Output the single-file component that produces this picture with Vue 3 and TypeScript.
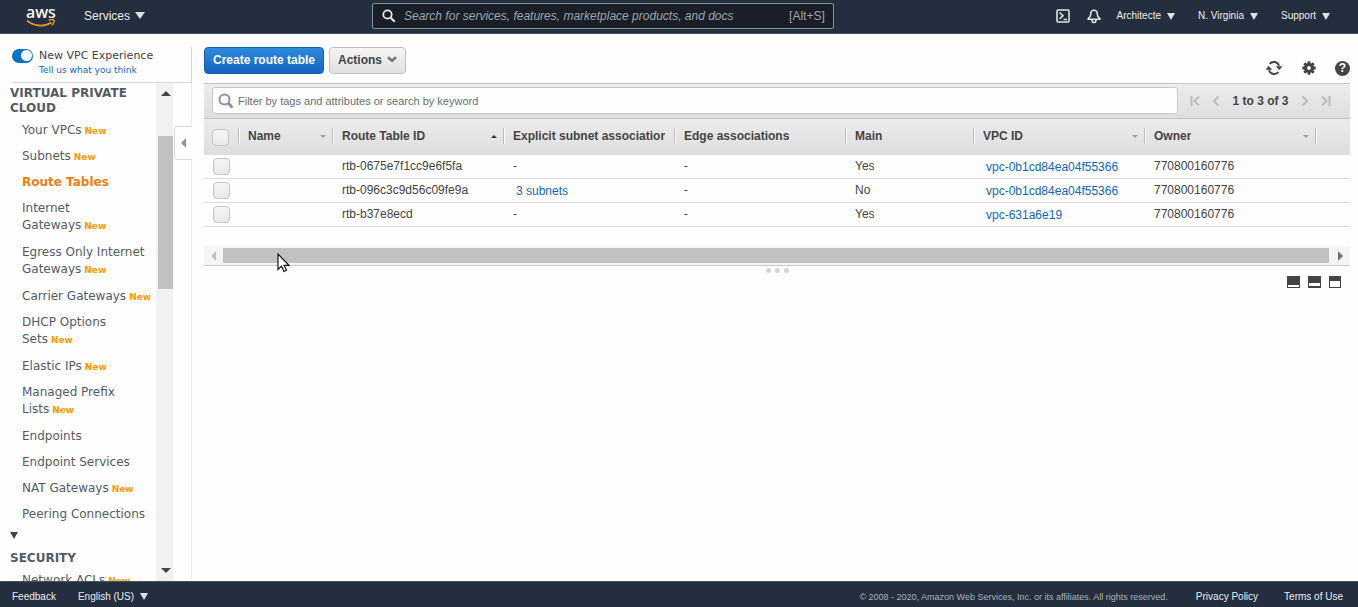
<script setup lang="ts">
import { ref } from 'vue'

interface NavItem { lines: string[]; isNew?: boolean; active?: boolean }
interface Column { label: string; cls: string; sort?: 'asc' | 'idle' }
interface RouteTable { id: string; subnets?: string; edge: string; main: string; vpc: string; owner: string }

const navItems: NavItem[] = [
  { lines: ['Your VPCs'], isNew: true },
  { lines: ['Subnets'], isNew: true },
  { lines: ['Route Tables'], active: true },
  { lines: ['Internet', 'Gateways'], isNew: true },
  { lines: ['Egress Only Internet', 'Gateways'], isNew: true },
  { lines: ['Carrier Gateways'], isNew: true },
  { lines: ['DHCP Options', 'Sets'], isNew: true },
  { lines: ['Elastic IPs'], isNew: true },
  { lines: ['Managed Prefix', 'Lists'], isNew: true },
  { lines: ['Endpoints'] },
  { lines: ['Endpoint Services'] },
  { lines: ['NAT Gateways'], isNew: true },
  { lines: ['Peering Connections'] },
]

const columns: Column[] = [
  { label: 'Name', cls: 'c-name', sort: 'idle' },
  { label: 'Route Table ID', cls: 'c-wide', sort: 'asc' },
  { label: 'Explicit subnet association', cls: 'c-wide' },
  { label: 'Edge associations', cls: 'c-wide' },
  { label: 'Main', cls: 'c-main' },
  { label: 'VPC ID', cls: 'c-wide', sort: 'idle' },
  { label: 'Owner', cls: 'c-wide', sort: 'idle' },
]

const rows: RouteTable[] = [
  { id: 'rtb-0675e7f1cc9e6f5fa', edge: '-', main: 'Yes', vpc: 'vpc-0b1cd84ea04f55366', owner: '770800160776' },
  { id: 'rtb-096c3c9d56c09fe9a', subnets: '3 subnets', edge: '-', main: 'No', vpc: 'vpc-0b1cd84ea04f55366', owner: '770800160776' },
  { id: 'rtb-b37e8ecd', edge: '-', main: 'Yes', vpc: 'vpc-631a6e19', owner: '770800160776' },
]

const accountMenus = ['Architecte', 'N. Virginia', 'Support']
const newExperience = ref(true)
const filter = ref('')
const search = ref('')
</script>

<template>
  <div class="console">
    <header class="topbar">
      <a class="logo" href="#" aria-label="AWS home">
        <span class="logo-text">aws</span>
        <svg class="smile" width="30" height="10" viewBox="0 0 30 10" aria-hidden="true">
          <path d="M1 1.600C8 7.600 19 8 25.400 3.600" fill="none" stroke="#f79a20" stroke-width="1.800" />
          <path d="M22.600 1.200C25 .5 27.500.6 28 1.200s-.3 3.300-2 5.200" fill="none" stroke="#f79a20" stroke-width="1.300" />
        </svg>
      </a>
      <button class="menu services" type="button">Services<i class="tri tri-lg"></i></button>
      <label class="search">
        <svg width="14" height="14" viewBox="0 0 14 14" aria-hidden="true">
          <circle cx="5.500" cy="5.500" r="4.200" fill="none" stroke="#e8eaea" stroke-width="1.800" />
          <path d="M8.700 8.700 12.700 12.700" stroke="#e8eaea" stroke-width="2" />
        </svg>
        <input v-model="search" type="text" placeholder="Search for services, features, marketplace products, and docs" aria-label="Search services" />
        <span class="hint">[Alt+S]</span>
      </label>
      <div class="account">
        <button class="menu icon" type="button" aria-label="CloudShell">
          <svg width="14" height="14" viewBox="0 0 14 14" fill="none" stroke="#dde3e1" stroke-width="1.600">
            <rect x="1" y="1" width="12" height="12" rx="1" />
            <path d="M3.500 3.500 7 6.700 3.500 10M7.500 10.500H11" />
          </svg>
        </button>
        <button class="menu icon bell" type="button" aria-label="Notifications">
          <svg width="14" height="15" viewBox="0 0 14 15" fill="none" stroke="#dde3e1" stroke-width="1.600">
            <path d="M7 1.200C4.600 1.200 3.700 3 3.700 5.200 3.700 7.500 2.600 8.500 1.200 9.700V10.300H12.800V9.700C11.400 8.500 10.300 7.500 10.300 5.200 10.300 3 9.400 1.200 7 1.200Z" />
            <path d="M5 11c0 3.400 4 3.400 4 0" />
          </svg>
        </button>
        <button v-for="m in accountMenus" :key="m" class="menu small" type="button">{{ m }}<i class="tri"></i></button>
      </div>
    </header>

    <div class="body">
      <aside class="sidebar">
        <div class="experience">
          <label class="toggle">
            <input v-model="newExperience" type="checkbox" role="switch" />
            <span>New VPC Experience</span>
          </label>
          <a href="#">Tell us what you think</a>
        </div>
        <div class="side-body">
          <nav>
            <h2>VIRTUAL PRIVATE CLOUD</h2>
            <ul>
              <li v-for="item in navItems" :key="item.lines.join(' ')" :class="{ double: item.lines.length > 1 }">
                <a href="#" :class="{ active: item.active }">
                  <template v-for="(line, i) in item.lines" :key="line"><br v-if="i > 0" />{{ line }}</template>
                </a><b v-if="item.isNew">New</b>
              </li>
            </ul>
            <i class="tri section-tri"></i>
            <h2>SECURITY</h2>
            <ul class="security"><li><a href="#">Network ACLs</a><b>New</b></li></ul>
          </nav>
          <div class="vscroll" aria-hidden="true">
            <i class="arrow up"></i>
            <span class="vthumb"></span>
            <i class="arrow down"></i>
          </div>
          <div class="gutter">
            <button class="collapse" type="button" aria-label="Collapse navigation"><i class="arrow left"></i></button>
          </div>
        </div>
      </aside>

      <main>
        <div class="actions">
          <button class="btn primary" type="button">Create route table</button>
          <button class="btn" type="button">Actions
            <svg width="10" height="7" viewBox="0 0 10 7" aria-hidden="true"><path d="M1 1.200 5 4.800 9 1.200" fill="none" stroke="#777" stroke-width="2.600" /></svg>
          </button>
          <div class="tools">
            <button type="button" aria-label="Refresh">
              <svg width="18" height="16" viewBox="0 0 18 16">
                <path d="M4.700 4C7 .9 12.600 1.200 14 5.800M13.300 12C11 15.100 5.400 14.800 4 10.200" fill="none" stroke="#444" stroke-width="2" />
                <path d="M10.800 6.300H17.600L14.200 10ZM.4 9.700H7.200L3.800 6Z" fill="#444" />
              </svg>
            </button>
            <button type="button" aria-label="Settings">
              <svg width="14" height="14" viewBox="0 0 14 14">
                <circle cx="7" cy="7" r="3.500" fill="none" stroke="#444" stroke-width="3.200" />
                <path d="M7 .3V3M7 11v2.700M.3 7H3M11 7h2.700M2.300 2.300 4 4M10 10l1.700 1.700M2.300 11.700 4 10M10 4l1.700-1.700" stroke="#444" stroke-width="2.800" />
              </svg>
            </button>
            <button class="help" type="button" aria-label="Help">?</button>
          </div>
        </div>

        <div class="filterbar">
          <label class="filter">
            <svg width="16" height="16" viewBox="0 0 16 16" aria-hidden="true">
              <circle cx="6.500" cy="6.500" r="5" fill="none" stroke="#8d9494" stroke-width="2" />
              <path d="M10 10 14.500 14.500" stroke="#8d9494" stroke-width="3" />
            </svg>
            <input v-model="filter" type="text" placeholder="Filter by tags and attributes or search by keyword" aria-label="Filter route tables" />
          </label>
          <div class="pager">
            <button type="button" aria-label="First page"><svg width="10" height="12" viewBox="0 0 10 12"><path d="M1.500 1v10M9 1.500 4.500 6 9 10.500" /></svg></button>
            <button type="button" aria-label="Previous page"><svg width="8" height="12" viewBox="0 0 8 12"><path d="M6.500 1.500 2 6l4.500 4.500" /></svg></button>
            <span>1 to 3 of 3</span>
            <button type="button" aria-label="Next page"><svg width="8" height="12" viewBox="0 0 8 12"><path d="M1.500 1.500 6 6l-4.500 4.500" /></svg></button>
            <button type="button" aria-label="Last page"><svg width="10" height="12" viewBox="0 0 10 12"><path d="M8.500 1v10M1 1.500 5.500 6 1 10.500" /></svg></button>
          </div>
        </div>

        <table>
          <colgroup>
            <col class="c-check" />
            <col v-for="c in columns" :key="c.label" :class="c.cls" />
            <col />
          </colgroup>
          <thead>
            <tr>
              <th class="check"><input type="checkbox" aria-label="Select all" /></th>
              <th v-for="c in columns" :key="c.label" scope="col">
                <div class="head"><span>{{ c.label }}</span><i v-if="c.sort" :class="['sort', c.sort]"></i></div>
              </th>
              <th><div class="head"></div></th>
            </tr>
          </thead>
          <tbody>
            <tr v-for="r in rows" :key="r.id">
              <td class="check"><input type="checkbox" :aria-label="'Select ' + r.id" /></td>
              <td></td>
              <td>{{ r.id }}</td>
              <td :class="{ linked: r.subnets }"><a v-if="r.subnets" href="#">{{ r.subnets }}</a><template v-else>-</template></td>
              <td>{{ r.edge }}</td>
              <td>{{ r.main }}</td>
              <td class="linked"><a href="#">{{ r.vpc }}</a></td>
              <td>{{ r.owner }}</td>
              <td></td>
            </tr>
          </tbody>
        </table>

        <div class="hscroll" aria-hidden="true">
          <i class="arrow left pale"></i><span class="hthumb"></span><i class="arrow right"></i>
          <svg class="pointer" width="13" height="20" viewBox="0 0 13 20">
            <path d="M1 1V16.500L4.500 13.300 7 18.500 9.500 17.300 7.200 12.400H12Z" fill="#fff" stroke="#111" stroke-width="1.200" />
          </svg>
        </div>
        <div class="grip" aria-hidden="true"><i></i><i></i><i></i></div>
        <div class="panes">
          <button class="low" type="button" aria-label="Minimise details"></button>
          <button class="mid" type="button" aria-label="Split details"></button>
          <button class="full" type="button" aria-label="Maximise details"></button>
        </div>
      </main>
    </div>

    <footer>
      <button class="menu small" type="button">Feedback</button>
      <button class="menu small lang" type="button">English (US)<i class="tri"></i></button>
      <span class="copyright">© 2008 - 2020, Amazon Web Services, Inc. or its affiliates. All rights reserved.</span>
      <a href="#">Privacy Policy</a>
      <a href="#">Terms of Use</a>
    </footer>
  </div>
</template>

<style>
body { margin: 0; background: #fefefe; }
</style>

<style scoped>
* { box-sizing: border-box; }
.console { height: 100vh; display: flex; flex-direction: column; overflow: hidden; font: 12px/16px "Liberation Sans", Arial, sans-serif; color: #444; }
button { font: inherit; color: inherit; border: 0; background: none; padding: 0; margin: 0; cursor: pointer; }
a { color: #1166bb; text-decoration: none; }
svg { display: block; flex: none; }

.topbar { flex: none; height: 34px; background: #232f3e; border-bottom: 1px solid #4a505c; display: flex; align-items: center; color: #eee; }
.logo { width: 30px; margin-left: 26px; display: flex; flex-direction: column; color: #fff; }
.logo-text { font: 500 16px/14px "Noto Sans", sans-serif; text-align: center; height: 14px; width: 28px; }
.menu { display: inline-flex; align-items: center; gap: 5px; white-space: nowrap; }
.services { margin-left: 28px; padding-bottom: 2px; }
.small { font-size: 10px; color: #eee; gap: 6px; }
.tri { border: 4px solid transparent; border-top: 7px solid #dde3e1; border-bottom: 0; }
.tri-lg { border-left-width: 5px; border-right-width: 5px; margin-left: 0; }
.search { width: 34%; height: 26px; margin-left: 227px; margin-bottom: 1px; padding: 0 8px 0 9px; background: #1a1e29; border: 1px solid #879596; border-radius: 2px; display: flex; align-items: center; gap: 8px; }
.search input { flex: 1; min-width: 0; border: 0; outline: 0; padding: 0; background: none; color: #eee; font: inherit; }
.search input::placeholder { color: #9ba7a8; font-style: italic; opacity: 1; }
.hint { color: #9ba7a8; }
.account { margin-left: auto; margin-right: 28px; display: flex; align-items: center; padding-bottom: 1px; }
.bell { margin: 0 16px 0 17px; }
.account .small + .small { margin-left: 23px; }

.body { flex: 1; min-height: 0; display: flex; }
.sidebar { flex: none; width: 192px; margin-top: 13px; display: flex; flex-direction: column; font: 12px/17px "DejaVu Sans", Verdana, sans-serif; color: #545b64; }
.experience { flex: none; height: 36px; margin-left: 12px; border-right: 1px solid #d5dbdb; border-bottom: 1px solid #d5dbdb; }
.experience a { display: block; margin-left: 27px; font-size: 9px; line-height: 12px; }
.toggle { display: flex; align-items: center; gap: 6px; height: 17px; white-space: nowrap; font-size: 11px; color: #444; }
.toggle input { appearance: none; margin: 0; width: 21px; height: 14px; border-radius: 7px; background: #0972c8; display: flex; align-items: center; justify-content: flex-end; padding: 1px; }
.toggle input::before { content: ""; width: 11px; height: 11px; border-radius: 50%; background: #fff; }
.side-body { flex: 1; min-height: 0; display: flex; }
nav { flex: none; width: 156px; padding: 3px 0 0 10px; overflow: hidden; white-space: nowrap; }
nav h2 { margin: 0; font-size: 12px; line-height: 15px; white-space: normal; font-weight: bold; }
nav ul { list-style: none; margin: 0; padding: 6px 0 0 12px; }
nav li { margin-bottom: 9px; }
nav li.double { margin-bottom: 10px; }
nav li a { color: #545b64; }
nav li a.active { color: #ec7f12; font-weight: bold; }
nav li b { margin-left: 3px; font-size: 9px; line-height: 10px; color: #ff9900; }
.section-tri { display: block; width: 8px; margin: 4px 0 12px; border-top-color: #444; }
nav .security { padding-top: 6px; }
.vscroll { flex: none; width: 17px; background: #f1f1f1; display: flex; flex-direction: column; align-items: center; padding: 8px 0 8px 2px; }
.arrow { width: 0; height: 0; border: 5px solid transparent; }
.arrow.up { border-top: 0; border-bottom-color: #444; }
.arrow.down { border-bottom: 0; border-top-color: #444; margin-top: auto; }
.arrow.left { border-left: 0; border-right-color: #8d9494; }
.arrow.right { border-right: 0; border-left-color: #826a70; }
.arrow.pale { border-right-color: #c1c4c3; }
.vthumb { width: 15px; height: 153px; background: #c0c2c1; margin-top: 40px; }
.gutter { flex: 1; min-width: 0; border-right: 1px solid #eaeded; padding: 43px 0 0 1px; }
.collapse { width: 18px; height: 34px; border: 1px solid #d5dbdb; border-right: 0; border-radius: 4px 0 0 4px; background: #fefefe; display: flex; align-items: center; justify-content: center; }

main { flex: 1; min-width: 0; padding: 13px 8px 0 12px; }
.actions { display: flex; align-items: flex-start; gap: 5px; height: 36px; }
.btn { height: 27px; padding: 0 8px; border: 1px solid #c1c1c1; border-radius: 4px; background: linear-gradient(#f5f5f5, #e0e0e0); font-weight: bold; white-space: nowrap; display: flex; align-items: center; gap: 5px; padding-bottom: 2px; }
.primary { color: #fff; border-color: #1660b0; background: linear-gradient(#2e8ade, #1563bd); }
.tools { margin: 13px 0 0 auto; display: flex; align-items: center; gap: 19px; height: 16px; }
.help { width: 15px; height: 15px; border-radius: 50%; background: #444; color: #fff; font-weight: bold; line-height: 15px; text-align: center; }
.filterbar { height: 36px; border-top: 1px solid #c5c5c5; border-bottom: 1px solid #c5c5c5; background: linear-gradient(#ededed, #dedede); display: flex; align-items: center; padding: 0 0 1px 8px; }
.filter { flex: 1; height: 27px; padding: 0 5px; border: 1px solid #c8c8c8; border-radius: 3px; background: #fefefe; display: flex; align-items: center; gap: 4px; }
.filter input { flex: 1; min-width: 0; border: 0; outline: 0; padding: 0; background: none; color: #444; font-size: 11px; font-family: inherit; }
.filter input::placeholder { color: #6b7071; opacity: 1; }
.pager { width: 172px; padding: 0 19px 0 12px; display: flex; align-items: center; justify-content: space-between; font-weight: bold; white-space: nowrap; }
.pager svg { fill: none; stroke: #b8bdbc; stroke-width: 2; }

table { width: 100%; table-layout: fixed; border-collapse: separate; border-spacing: 0; }
.c-check { width: 34px; }
.c-name { width: 94px; }
.c-wide { width: 171px; }
.c-main { width: 128px; }
thead tr { height: 36px; background: linear-gradient(#ececec, #dddddd); }
th { padding: 0; text-align: left; vertical-align: top; }
.head { height: 16px; margin-top: 9px; padding: 0 9px; border-left: 1px solid #bbb; box-shadow: inset 1px 0 #fff; display: flex; justify-content: space-between; align-items: center; overflow: hidden; white-space: nowrap; }
.head span { overflow: hidden; min-width: 0; }
.sort { flex: none; margin-right: -3px; border: 3px solid transparent; }
.sort.idle { border-top-color: #999f9e; border-bottom: 0; }
.sort.asc { border-bottom-color: #333; border-top: 0; }
td { height: 24px; padding: 0 0 1px 10px; line-height: 16px; border-bottom: 1px solid #ddd; white-space: nowrap; overflow: hidden; }
td.linked { padding: 1px 0 0 13px; }
.check { padding: 0 0 0 8px; vertical-align: middle; }
td.check { padding-left: 9px; }
.check input { appearance: none; display: block; width: 17px; height: 17px; margin: 0; border: 1px solid #c4c4c4; border-radius: 4px; background: linear-gradient(#f6f6f6, #e9e9e9); }
.hscroll { position: relative; margin-top: 19px; height: 20px; padding: 0 7px; background: #f5f5f5; border-bottom: 1px solid #c8c8c8; display: flex; align-items: center; gap: 7px; }
.hthumb { flex: 1; height: 15px; background: #c0c2c1; }
.hscroll .arrow.right { margin-left: 2px; }
.pointer { position: absolute; left: 73px; top: 7px; }
.grip { height: 8px; display: flex; justify-content: center; align-items: center; gap: 4px; }
.grip i { width: 5px; height: 5px; border-radius: 50%; background: #d5d5d5; }
.panes { display: flex; justify-content: flex-end; gap: 8px; padding: 2px 9px 0 0; }
.panes button { width: 12px; height: 12px; border: 1px solid #444; background: #444; }
.panes .low { border-width: 9px 1px 1px; background: #fff; width: 13px; }
.panes .mid { border-width: 7px 1px 2px; background: #fff; width: 13px; }
.panes .full { border-width: 5px 1px 1px; background: #fff; }

footer { flex: none; height: 26px; padding: 4px 15px 0 12px; background: #232f3e; border-top: 1px solid #4a505c; display: flex; align-items: center; font-size: 10px; color: #eee; white-space: nowrap; }
.lang { margin-left: 22px; }
.copyright { margin-left: auto; color: #aab3b5; font-size: 9px; }
footer a { color: #eee; margin-left: 26px; }
.copyright + a { margin-left: 28px; }
</style>
